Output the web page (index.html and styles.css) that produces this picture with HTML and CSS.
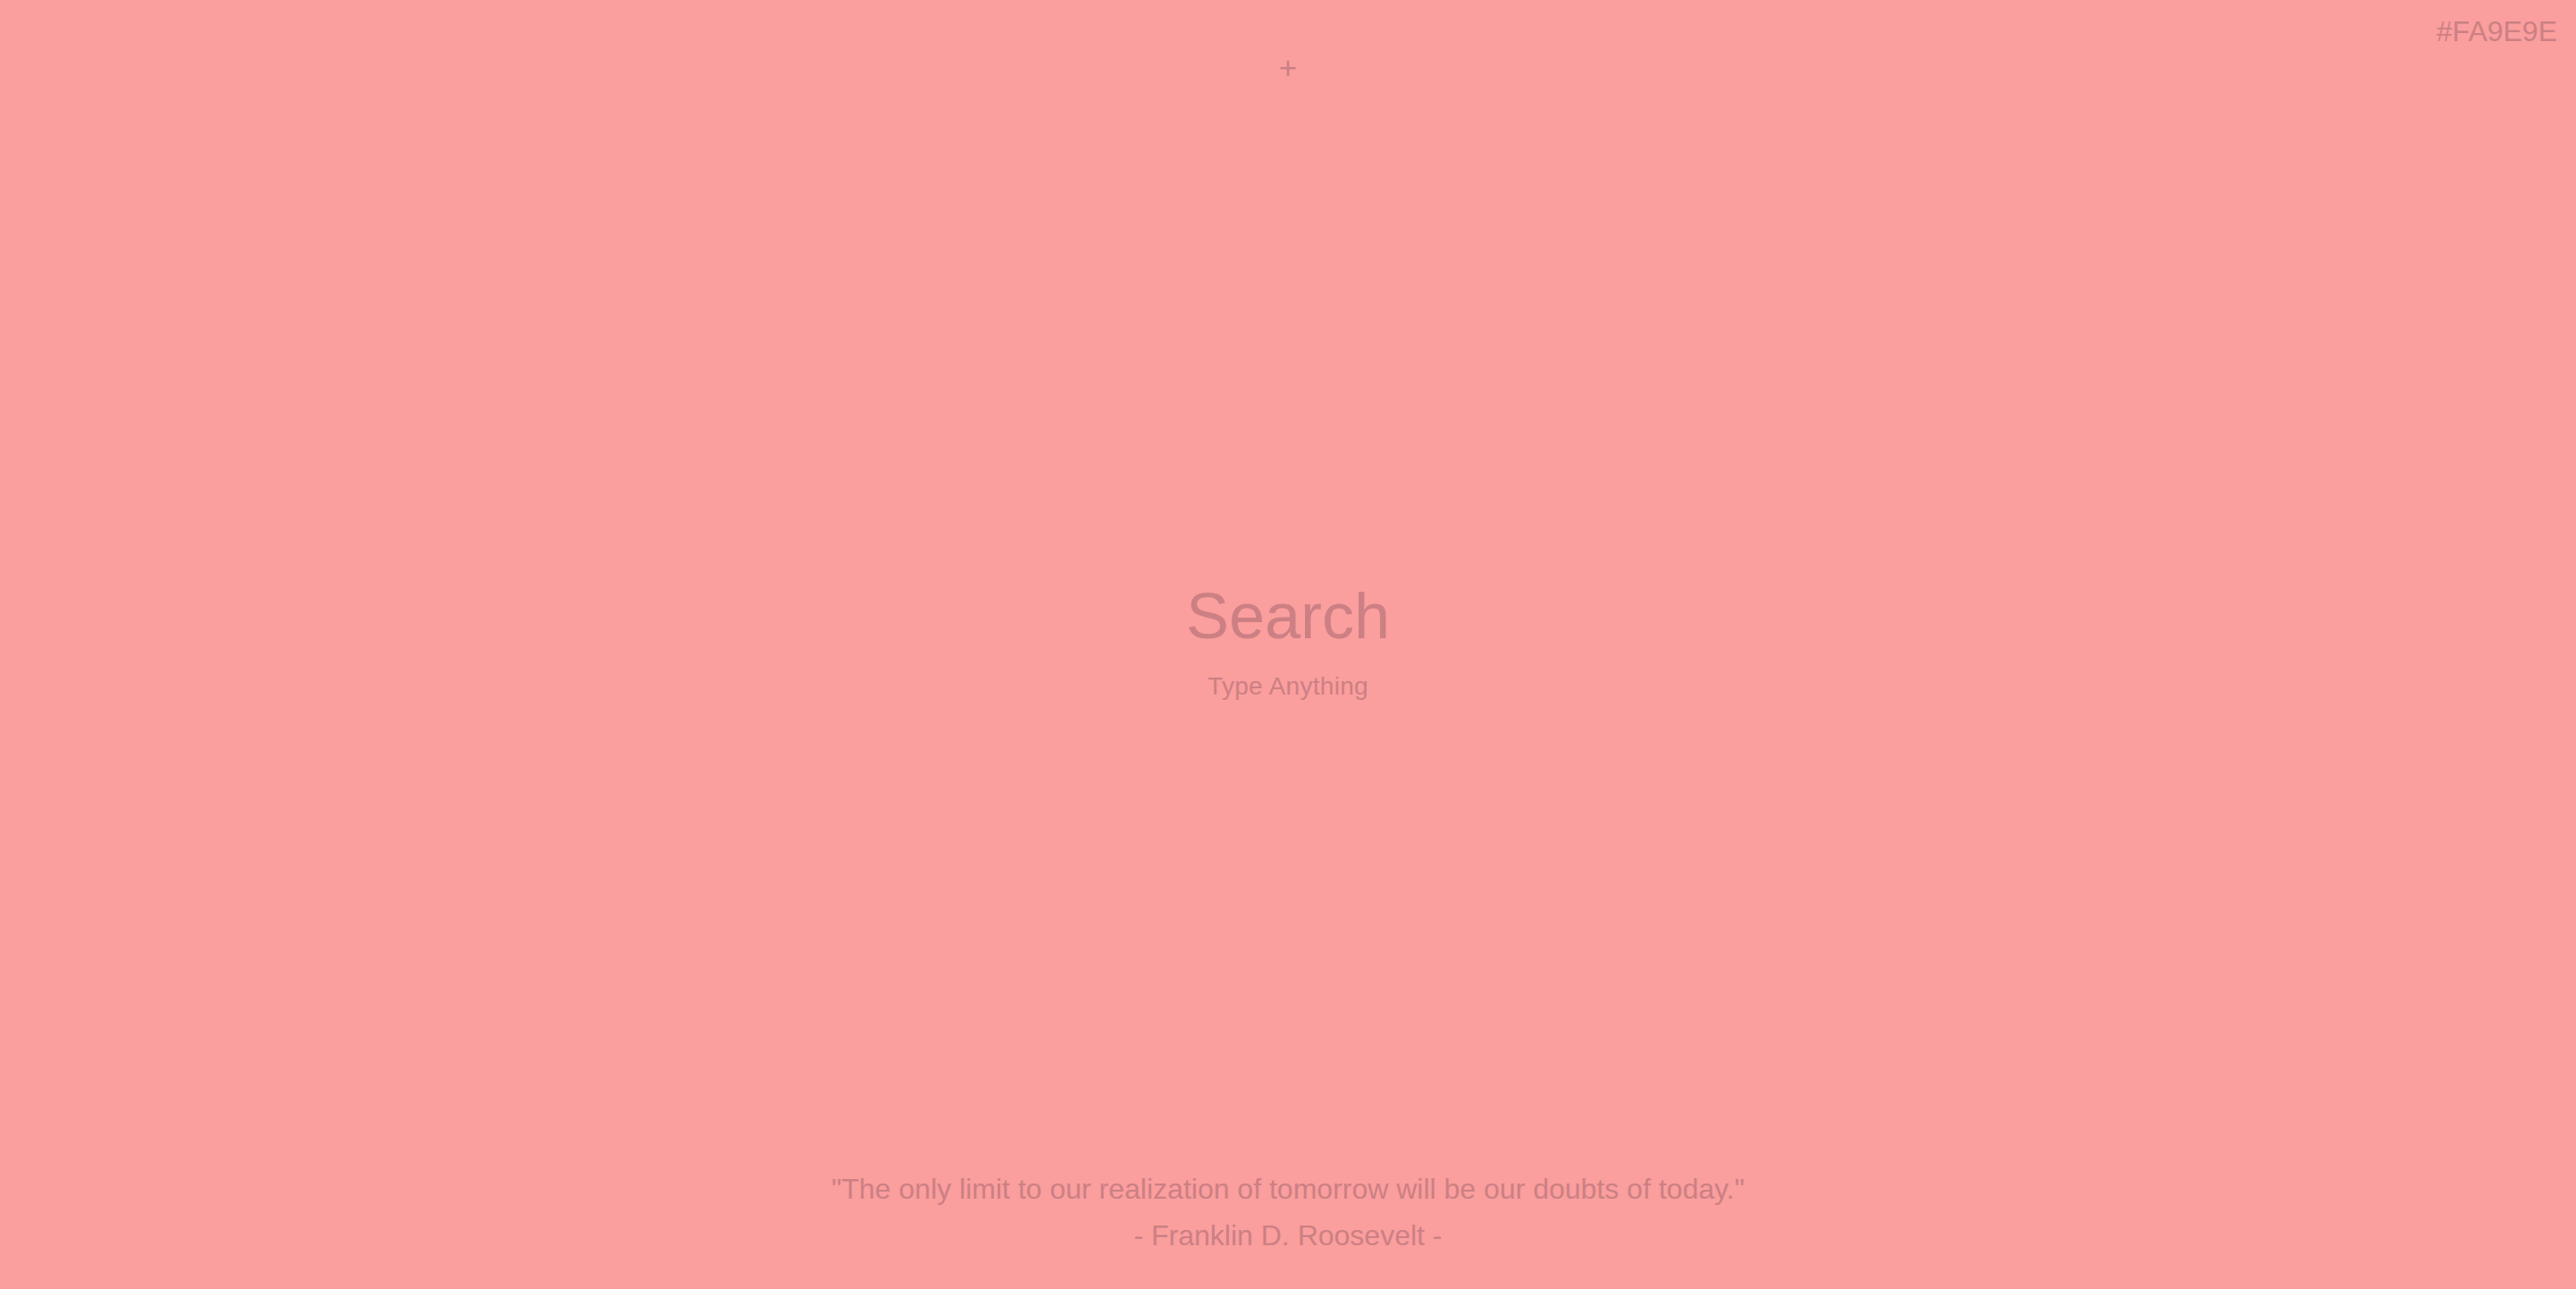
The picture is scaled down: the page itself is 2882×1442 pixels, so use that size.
FILE: index.html
```html
<!DOCTYPE html>
<html lang="en">
<head>
<meta charset="utf-8">
<title>New Tab</title>
<link rel="stylesheet" href="styles.css">
</head>
<body>
  <div class="hex">#FA9E9E</div>
  <header class="top">
    <span class="plus">+</span>
  </header>
  <main class="center">
    <div class="search">Search</div>
    <div class="hint">Type Anything</div>
  </main>
  <footer class="quote">
    <p class="quote-text">"The only limit to our realization of tomorrow will be our doubts of today."</p>
    <p class="quote-author">- Franklin D. Roosevelt -</p>
  </footer>
</body>
</html>
```

FILE: styles.css
```css
html, body {
  margin: 0;
  padding: 0;
  height: 100%;
}
body {
  background: #FA9E9E;
  color: #CC8083;
  font-family: "Liberation Sans", Arial, sans-serif;
  display: flex;
  flex-direction: column;
  position: relative;
  overflow: hidden;
}
.hex {
  position: absolute;
  top: 19px;
  right: 21px;
  font-size: 32px;
  line-height: 32px;
}
.top {
  height: 138px;
  box-sizing: border-box;
  padding-top: 58px;
  display: flex;
  justify-content: center;
}
.plus {
  font-size: 35px;
  line-height: 35px;
}
.center {
  flex: 1;
  display: flex;
  flex-direction: column;
  align-items: center;
  justify-content: center;
  padding-bottom: 7px;
}
.search {
  font-size: 72px;
  line-height: 72px;
}
.hint {
  margin-top: 29px;
  font-size: 28px;
  line-height: 28px;
  letter-spacing: 0.3px;
}
.quote {
  height: 138px;
  box-sizing: border-box;
  padding-bottom: 34px;
  display: flex;
  flex-direction: column;
  justify-content: flex-end;
  align-items: center;
}
.quote p {
  margin: 0;
  font-size: 32px;
  line-height: 52px;
}
```
